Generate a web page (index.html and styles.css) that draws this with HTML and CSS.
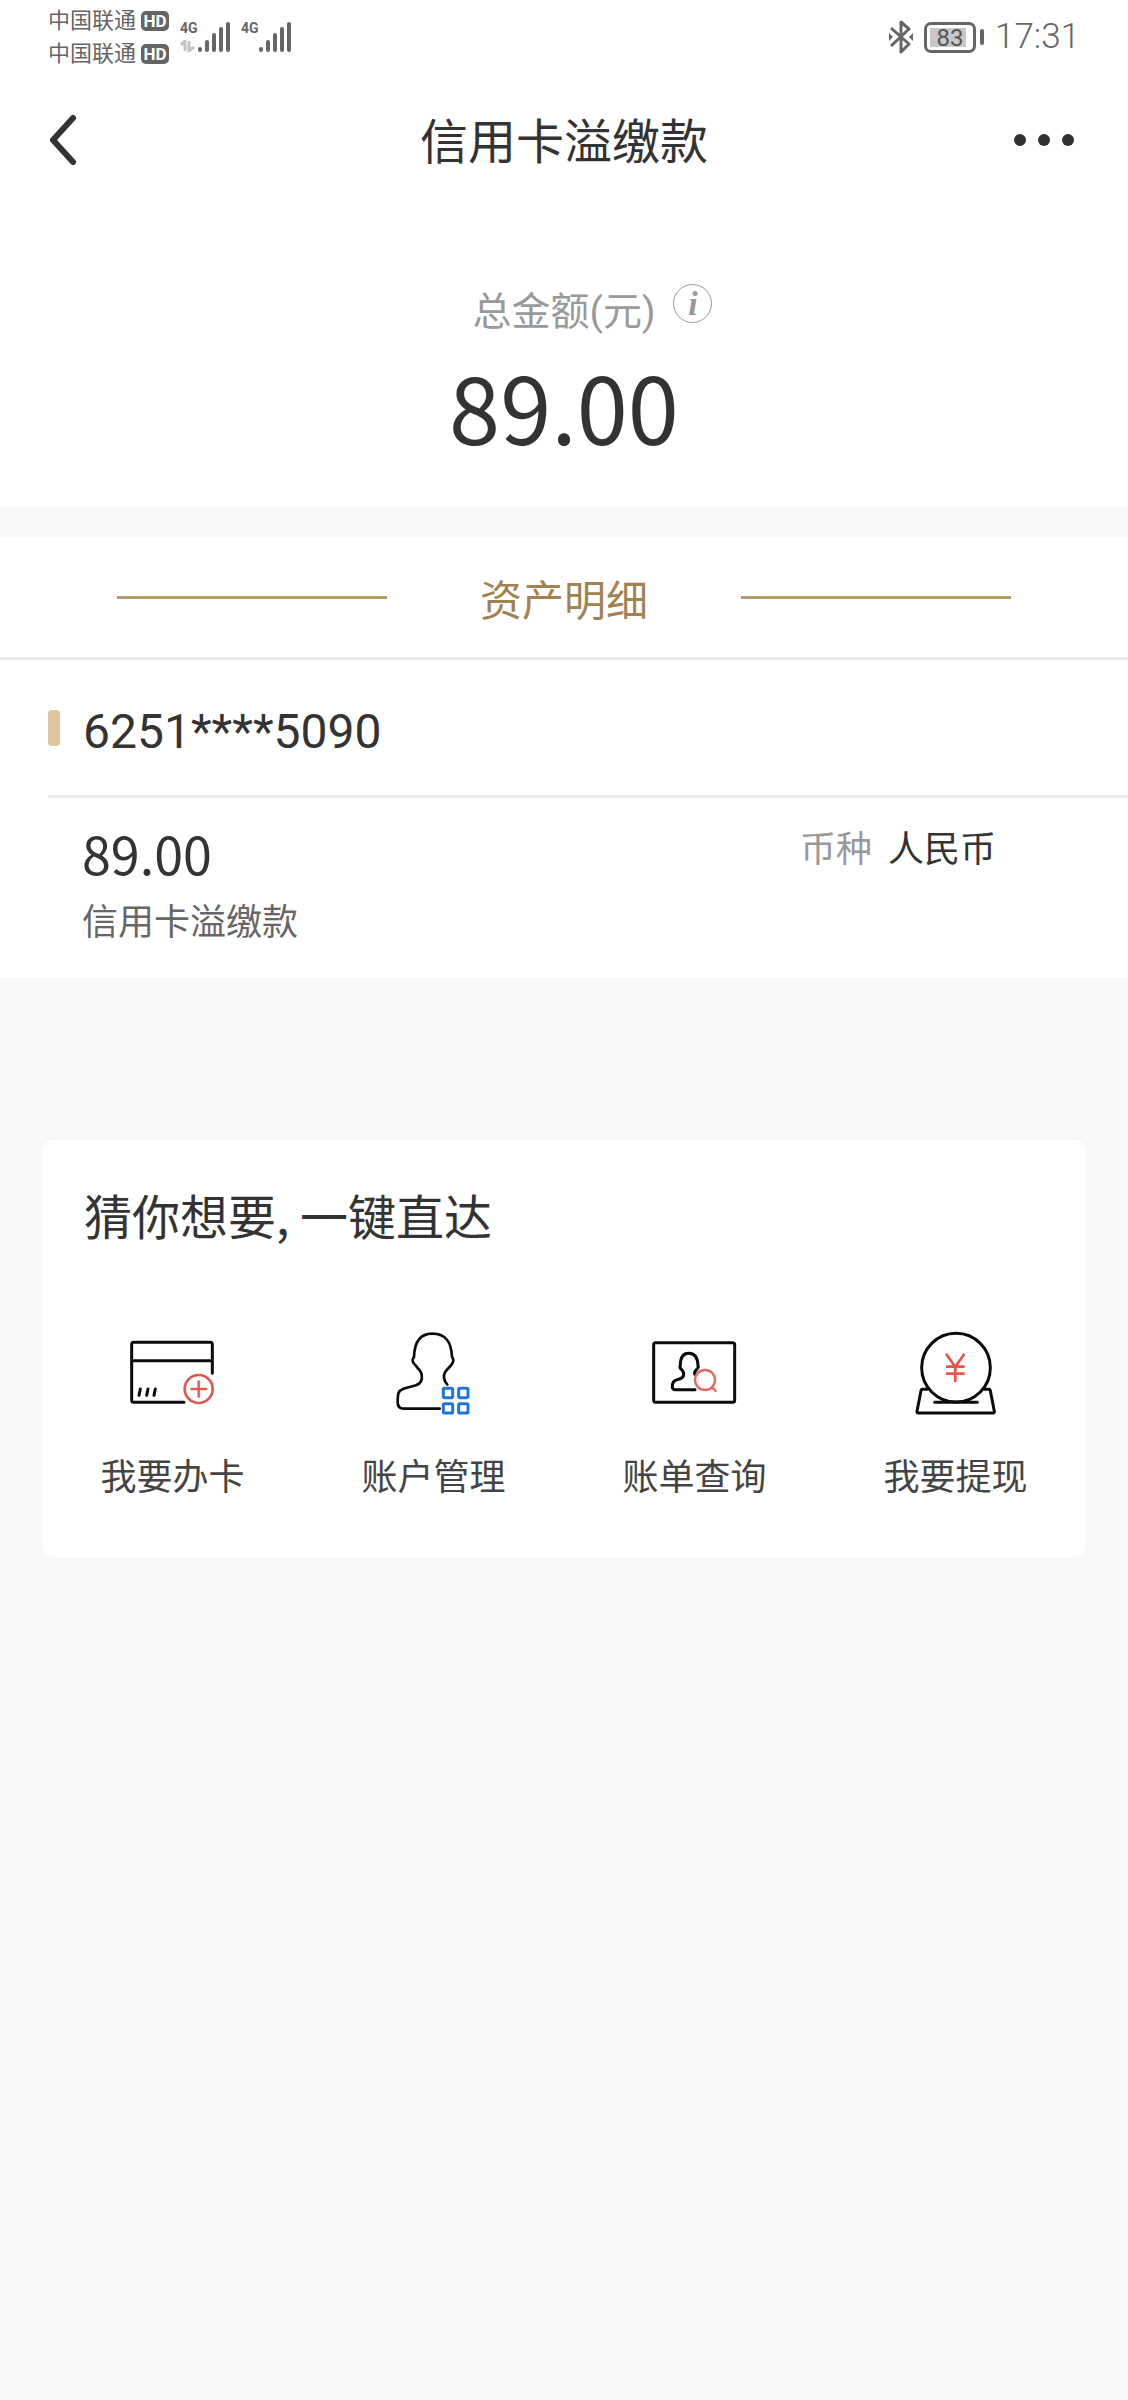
FILE: index.html
```html
<!DOCTYPE html>
<html lang="zh-CN">
<head>
<meta charset="utf-8">
<meta name="viewport" content="width=device-width, initial-scale=1">
<title>信用卡溢缴款</title>
<link rel="stylesheet" href="styles.css">
</head>
<body>
<div class="status-bar">
  <div class="carriers">
    <div class="carrier"><span>中国联通</span><span class="hd">HD</span></div>
    <div class="carrier"><span>中国联通</span><span class="hd">HD</span></div>
  </div>
  <div class="signals">
    <div class="signal">
      <div class="network">
        <span>4G</span>
        <svg width="16" height="12" viewBox="0 0 16 12" fill="none" stroke="#c4c4c4" stroke-width="3" aria-hidden="true"><path d="M1 5l4-4v10M9 1v10l5-4"/></svg>
      </div>
      <svg width="34" height="32" viewBox="0 0 34 32" stroke="#656565" stroke-width="4" stroke-linecap="round" aria-hidden="true"><path d="M3 29v-1M10 29v-8M17 29V14M24 29V8M31 29V3"/></svg>
    </div>
    <div class="signal">
      <div class="network"><span>4G</span></div>
      <svg width="34" height="32" viewBox="0 0 34 32" stroke="#656565" stroke-width="4" stroke-linecap="round" aria-hidden="true"><path d="M3 29v-1M10 29v-8M17 29V14M24 29V8M31 29V3"/></svg>
    </div>
  </div>
  <div class="device">
    <svg width="24" height="34" viewBox="0 0 24 34" fill="none" stroke="#656565" stroke-width="3" stroke-linejoin="round" aria-hidden="true"><path d="M2 8l18 16-8 8V2l8 7L2 26"/><path d="M0 13v8l4-4zM24 13v8l-4-4z" fill="#656565" stroke="none"/></svg>
    <div class="battery"><span class="battery-body"><span class="battery-level">83</span></span><span class="battery-tip"></span></div>
    <time class="clock">17:31</time>
  </div>
</div>

<header class="nav">
  <button class="nav-button" type="button" aria-label="返回">
    <svg width="30" height="52" viewBox="0 0 30 52" fill="none" stroke="#333" stroke-width="6" stroke-linecap="round" stroke-linejoin="round"><path d="M26 4L6 26l20 22"/></svg>
  </button>
  <h1 class="nav-title">信用卡溢缴款</h1>
  <button class="nav-button nav-more" type="button" aria-label="更多">
    <svg width="62" height="14" viewBox="0 0 62 14" fill="#333"><circle cx="7" cy="7" r="6"/><circle cx="31" cy="7" r="6"/><circle cx="55" cy="7" r="6"/></svg>
  </button>
</header>

<main>
  <section class="total">
    <div class="total-label">
      <span class="total-text">总金额(元)</span>
      <button class="info" type="button" aria-label="说明">i</button>
    </div>
    <p class="total-amount">89.00</p>
  </section>

  <section class="assets">
    <div class="assets-head"><h2 class="assets-title">资产明细</h2></div>
    <div class="account"><span class="account-number">6251****5090</span></div>
    <div class="entry">
      <div>
        <p class="entry-amount">89.00</p>
        <p class="entry-name">信用卡溢缴款</p>
      </div>
      <p class="currency"><span class="currency-label">币种</span><span>人民币</span></p>
    </div>
  </section>

  <section class="shortcuts">
    <h2 class="shortcuts-title">猜你想要, 一键直达</h2>
    <nav class="shortcut-list">
      <a class="shortcut" href="#">
        <svg class="shortcut-icon" viewBox="-4 0 390 360" fill="none" stroke="#0b0b0b" stroke-width="9" stroke-linecap="round" stroke-linejoin="round" aria-hidden="true"><path d="M309 190V103q0-6-6-6H73q-6 0-6 6v168q0 6 6 6h151M67 152h242M93 237l-4 19M116 237l-4 19M138 237l-4 19"/><g stroke="#df574f" stroke-width="8"><circle cx="268" cy="237" r="42"/><path d="M246 237h45M268 214v46" stroke-width="7"/></g></svg>
        <span>我要办卡</span>
      </a>
      <a class="shortcut" href="#">
        <svg class="shortcut-icon" viewBox="-2 0 390 360" fill="none" stroke="#0b0b0b" stroke-width="8" stroke-linecap="round" stroke-linejoin="round" aria-hidden="true"><path d="M233 224c-12-12-12-29-7-37 8-11 13-15 18-21 4-7 7-9 7-15q0-6-4-10c-2-45-18-70-59-70s-54 33-55 70q-5 5-4 11c0 9 8 12 12 18 6 9 15 15 15 25 4 20-7 27-17 31l-38 10c-15 6-17 13-17 41 0 13 6 19 18 19h108"/><g stroke="#2075d8" stroke-width="9"><rect x="221" y="235" width="28" height="28" rx="4"/><rect x="267" y="235" width="28" height="28" rx="4"/><rect x="221" y="281" width="28" height="28" rx="4"/><rect x="267" y="281" width="28" height="28" rx="4"/></g></svg>
        <span>账户管理</span>
      </a>
      <a class="shortcut" href="#">
        <svg class="shortcut-icon" viewBox="1 0 390 360" fill="none" stroke="#0b0b0b" stroke-width="9" stroke-linecap="round" stroke-linejoin="round" aria-hidden="true"><rect x="72" y="98" width="243" height="179" rx="6"/><path d="M195 193c-2-6 1-10 6-15 5-4 6-7 4-12-1-22-9-36-28-36s-25 16-25 36c-3 6 0 10 5 14 5 5 6 12 4 18-2 7-9 8-18 11-12 4-15 8-15 22 0 6 3 8 9 8h59"/><g stroke="#e9655f" stroke-width="7"><circle cx="226" cy="210" r="30"/><path d="M247 232l11 11"/></g></svg>
        <span>账单查询</span>
      </a>
      <a class="shortcut" href="#">
        <svg class="shortcut-icon" viewBox="2 0 390 360" fill="none" stroke="#0b0b0b" stroke-width="9" stroke-linecap="round" stroke-linejoin="round" aria-hidden="true"><circle cx="197" cy="173" r="103"/><path d="M133 277h128M110 238H96q-3 0-4 4L80 304q-1 5 4 5h224q5 0 4-5l-12-62q-1-4-4-4h-14"/><path d="M167 131l28 40 27-40M167 170h56M167 191h56M195 171v45" stroke="#e9544a" stroke-width="8" stroke-linecap="butt"/></svg>
        <span>我要提现</span>
      </a>
    </nav>
  </section>
</main>
</body>
</html>
```
FILE: styles.css
```css
* {
  box-sizing: border-box;
}

body {
  margin: 0;
  background: #f7f7f7;
  color: #333;
  font-family: Roboto, "Noto Sans CJK SC", sans-serif;
  font-size: 36px;
  line-height: 48px;
}

h1,
h2,
p {
  margin: 0;
  font-weight: 400;
}

button {
  padding: 0;
  border: 0;
  background: none;
  color: inherit;
}

svg {
  display: block;
}

/* Status bar */
.status-bar {
  display: flex;
  align-items: center;
  height: 74px;
  padding: 0 48px;
  background: #fff;
  color: #656565;
}

.carriers {
  display: flex;
  flex-direction: column;
}

.carrier {
  display: flex;
  align-items: center;
  gap: 5px;
  font-size: 22px;
  line-height: 33px;
}

.hd {
  width: 28px;
  border-radius: 5px;
  background: #656565;
  color: #fff;
  font-size: 17px;
  font-weight: 700;
  line-height: 20px;
  text-align: center;
}

.signals {
  display: flex;
  gap: 10px;
  margin-left: 11px;
}

.signal {
  display: flex;
}

.network {
  display: flex;
  flex-direction: column;
  gap: 5px;
  width: 17px;
  font-size: 14px;
  font-weight: 700;
  line-height: 14px;
}

.device {
  display: flex;
  align-items: center;
  gap: 11px;
  margin-left: auto;
}

.battery {
  display: flex;
  align-items: center;
  gap: 4px;
}

.battery-body {
  padding: 3px;
  border: 3px solid #656565;
  border-radius: 7px;
}

.battery-level {
  display: block;
  width: 40px;
  height: 19px;
  background: linear-gradient(to right, #c8c8c8 90%, #fff 90%);
  color: #555;
  font-size: 24px;
  line-height: 20px;
  text-align: center;
}

.battery-tip {
  width: 4px;
  height: 16px;
  border-radius: 2px;
  background: #656565;
}

.clock {
  font-size: 35px;
  font-weight: 300;
}

/* Navigation */
.nav {
  display: grid;
  grid-template-columns: 1fr auto 1fr;
  align-items: center;
  height: 132px;
  padding: 0 53px 0 47px;
  background: #fff;
}

.nav-button {
  justify-self: start;
}

.nav-more {
  justify-self: end;
}

.nav-title {
  padding: 6px 0 0 6px;
  font-size: 48px;
  line-height: 64px;
}

/* Total amount */
.total {
  padding: 74px 0 48px;
  background: #fff;
}

.total-label {
  display: grid;
  grid-template-columns: 1fr auto 1fr;
  align-items: start;
  column-gap: 18px;
  color: #999;
  font-size: 39px;
  line-height: 64px;
}

.total-text {
  grid-column: 2;
}

.info {
  width: 39px;
  height: 39px;
  margin-top: 4px;
  border: 1px solid #999;
  border-radius: 50%;
  color: #999;
  font: italic 700 34px/36px "Liberation Serif", serif;
}

.total-amount {
  margin-top: 7px;
  font-family: "Noto Sans CJK SC", sans-serif;
  font-size: 92px;
  line-height: 108px;
  text-align: center;
}

/* Asset details */
.assets {
  margin-top: 30px;
  background: #fff;
}

.assets-head {
  display: flex;
  align-items: center;
  justify-content: center;
  gap: 93px;
  height: 123px;
  padding: 0 117px;
  border-bottom: 3px solid #ebebeb;
}

.assets-head::before,
.assets-head::after {
  content: "";
  flex: 1;
  height: 3px;
  background: #b09b69;
}

.assets-title {
  padding-top: 10px;
  color: #a28250;
  font-size: 42px;
  line-height: 64px;
}

.account {
  display: flex;
  align-items: center;
  gap: 23px;
  height: 138px;
  margin-left: 48px;
  border-bottom: 3px solid #ebebeb;
}

.account::before {
  content: "";
  width: 12px;
  height: 36px;
  border-radius: 4px;
  background: #dec39c;
}

.account-number {
  padding-top: 8px;
  font-size: 48px;
  line-height: 64px;
}

.entry {
  display: flex;
  align-items: flex-start;
  justify-content: space-between;
  padding: 28px 132px 31px 82px;
}

.entry-amount {
  font-family: "Noto Sans CJK SC", sans-serif;
  font-size: 52px;
  line-height: 54px;
}

.entry-name {
  margin-top: 19px;
  color: #666;
}

.currency {
  display: flex;
  gap: 16px;
}

.currency-label {
  color: #999;
}

/* Shortcuts */
.shortcuts {
  margin: 162px 42px 0;
  padding: 42px 0 55px;
  border-radius: 12px;
  background: #fff;
}

.shortcuts-title {
  padding: 0 42px;
  font-family: "Noto Sans CJK SC", sans-serif;
  font-size: 48px;
  line-height: 64px;
}

.shortcut-list {
  display: grid;
  grid-template-columns: repeat(4, 1fr);
  margin-top: 64px;
}

.shortcut {
  display: flex;
  flex-direction: column;
  align-items: center;
  gap: 24px;
  color: #444;
  text-decoration: none;
}

.shortcut-icon {
  width: 130px;
  height: 120px;
}
```
